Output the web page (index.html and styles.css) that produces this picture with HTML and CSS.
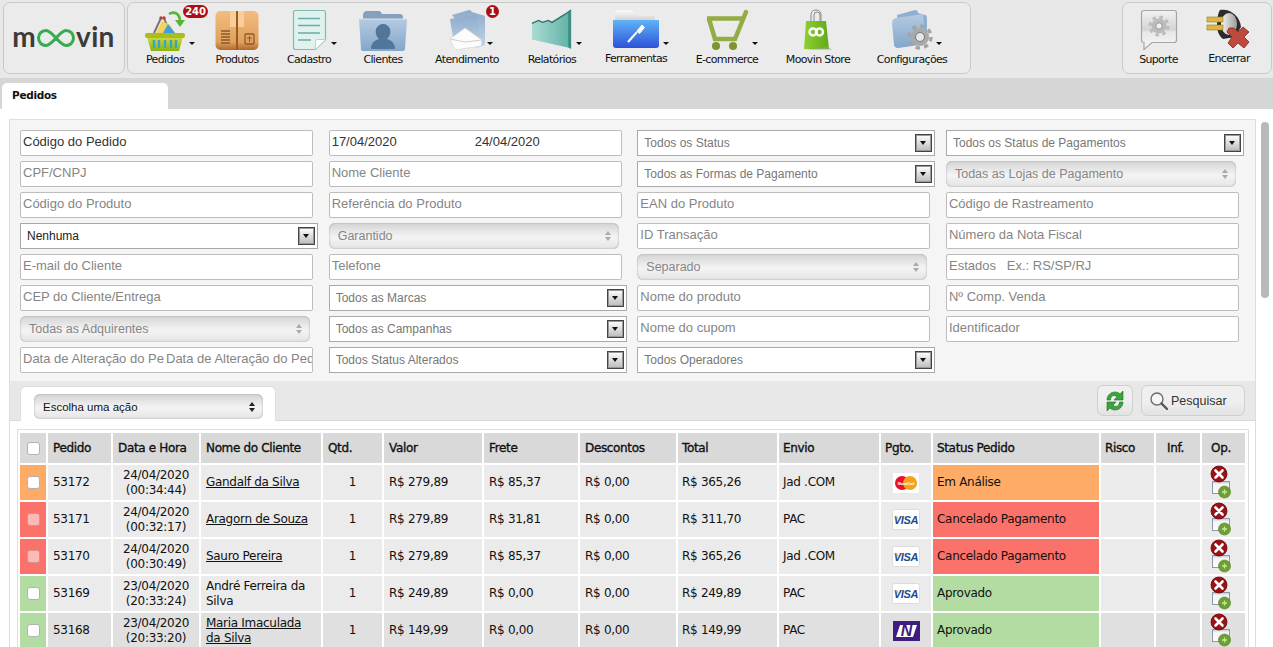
FILE: index.html
```html
<!DOCTYPE html>
<html lang="pt-BR">
<head>
<meta charset="utf-8">
<title>Pedidos</title>
<link rel="stylesheet" href="styles.css">
</head>
<body>
<svg class="defs" aria-hidden="true">
  <defs>
    <linearGradient id="gBlue" x1="0" y1="0" x2="0" y2="1"><stop offset="0" stop-color="#b4cbe2"/><stop offset="1" stop-color="#83a6c9"/></linearGradient>
    <linearGradient id="gBack" x1="0" y1="0" x2="0" y2="1"><stop offset="0" stop-color="#8dabca"/><stop offset="1" stop-color="#c3d6e8"/></linearGradient>
    <linearGradient id="gBox" x1="0" y1="0" x2="0" y2="1"><stop offset="0" stop-color="#f3bd7e"/><stop offset=".8" stop-color="#e0a05c"/><stop offset="1" stop-color="#b06828"/></linearGradient>
    <linearGradient id="gTeal" x1="0" y1="0" x2="1" y2="0"><stop offset="0" stop-color="#a9dcd3"/><stop offset="1" stop-color="#5fb0a6"/></linearGradient>
    <linearGradient id="gFolder" x1="0" y1="0" x2="0" y2="1"><stop offset="0" stop-color="#5fb4f6"/><stop offset="1" stop-color="#2c52d8"/></linearGradient>
    <linearGradient id="gPaper" x1="0" y1="0" x2="0" y2="1"><stop offset="0" stop-color="#fbfbfb"/><stop offset="1" stop-color="#c4c4c4"/></linearGradient>
    <linearGradient id="gBasket" x1="0" y1="0" x2="0" y2="1"><stop offset="0" stop-color="#d4d93a"/><stop offset="1" stop-color="#88b312"/></linearGradient>
    <linearGradient id="gBag" x1="0" y1="0" x2="1" y2="0"><stop offset="0" stop-color="#8fd030"/><stop offset="1" stop-color="#62a81a"/></linearGradient>
    <linearGradient id="gBubble" x1="0" y1="0" x2="0" y2="1"><stop offset="0" stop-color="#f2f2f2"/><stop offset=".5" stop-color="#d4d4d4"/><stop offset=".55" stop-color="#e8e8e8"/><stop offset="1" stop-color="#f6f6f6"/></linearGradient>
    <linearGradient id="gWheel" x1="0" y1="0" x2="1" y2="0"><stop offset="0" stop-color="#f6f6f6"/><stop offset="1" stop-color="#9c9c9c"/></linearGradient>
    <linearGradient id="gDoc" x1="0" y1="0" x2="0" y2="1"><stop offset="0" stop-color="#c2c8d4"/><stop offset=".25" stop-color="#f4f5f7"/><stop offset="1" stop-color="#fdfdfd"/></linearGradient>
    <symbol id="iDel" viewBox="0 0 18 18">
      <circle cx="9" cy="9" r="8" fill="#9c0f14" stroke="#5e0a0c" stroke-width=".8"/>
      <path d="M5.500 5.500l7 7M12.500 5.500l-7 7" stroke="#fff" stroke-width="2.600" stroke-linecap="round"/>
    </symbol>
    <symbol id="iAdd" viewBox="0 0 20 18">
      <rect x=".5" y=".5" width="17" height="12" fill="url(#gDoc)" stroke="#8f98a8"/>
      <circle cx="12.500" cy="11" r="6" fill="#6d9f35" stroke="#4c7f1a" stroke-width=".6"/>
      <path d="M12.500 8.500v5M10 11h5" stroke="#c5e69c" stroke-width="1.300"/>
    </symbol>
    <symbol id="iMaster" viewBox="0 0 26 20">
      <rect width="26" height="20" fill="#fff" rx="1"/>
      <circle cx="9" cy="10" r="7" fill="#e8102a"/>
      <circle cx="17" cy="10" r="7" fill="#f7a11b"/>
      <text x="13" y="11.500" class="mc-text">MasterCard</text>
    </symbol>
    <symbol id="iVisa" viewBox="0 0 28 21">
      <rect x=".5" y=".5" width="27" height="20" rx="2" fill="#fff" stroke="#dcdcdc"/>
      <text x="14" y="15" class="visa-text">VISA</text>
      <path d="M2.500 7.500l3 0 1 3z" fill="#f2ae2e"/>
    </symbol>
    <symbol id="iNet" viewBox="0 0 27 20">
      <rect width="27" height="20" fill="#3f1d7c"/>
      <path d="M7 4h17l-4 12H3z" fill="#fff"/>
      <text x="13.500" y="15.300" class="net-text">N</text>
    </symbol>
  </defs>
</svg>

<header class="topbar">
  <div class="box logo">
    <span class="logo-word">m</span>
    <svg class="logo-loop" viewBox="0 0 42 22" width="42" height="22"><path d="M11 3.500c-4.300 0-7.500 3.300-7.500 7.500s3.200 7.500 7.500 7.500c6.500 0 13.500-15 20-15 4.300 0 7.500 3.300 7.500 7.500s-3.200 7.500-7.500 7.500c-6.500 0-13.500-15-20-15z" fill="none" stroke="#36ab4f" stroke-width="3"/></svg>
    <span class="logo-word">vin</span>
  </div>

  <nav class="box nav">
    <a class="nav-item">
      <svg width="44" height="42" viewBox="0 0 44 42">
        <path d="M11 24L18 9M27 24L21 9" stroke="#77777a" stroke-width="2"/>
        <path d="M13 24l6-12 8 4 5 8z" fill="#f3d35c"/><path d="M20 24l5-9 7 9z" fill="#3d9fe0"/>
        <circle cx="18" cy="9" r="1.700" fill="#b7402f"/><circle cx="21" cy="9" r="1.700" fill="#b7402f"/>
        <path d="M26 5c5-3 10-1 11 6" fill="none" stroke="#56b534" stroke-width="2.600"/><path d="M32 11h10l-5 7z" fill="#56b534"/>
        <path d="M4 28h36l-4 14H8z" fill="url(#gBasket)"/>
        <path d="M11 31v8M16 31v8M22 31v8M28 31v8M33 31v8" stroke="#37a6c5" stroke-width="2.400"/>
        <rect x="2" y="24" width="40" height="5" rx="2" fill="#a9bd1c"/>
      </svg>
      <span class="caret caret-a"></span><span class="badge badge-a">240</span>
      <span class="nav-label">Pedidos</span>
    </a>
    <a class="nav-item">
      <svg width="44" height="42" viewBox="0 0 44 42">
        <rect y="2" x=".5" width="43" height="39" rx="5" fill="url(#gBox)"/>
        <rect x="15" y="2" width="14" height="16" fill="#f8cf9a"/>
        <rect x="21" y="2" width="2" height="39" fill="#9c5a20"/>
        <path d="M6 22h9M6 25h9M6 28h9M6 31h9M6 34h9" stroke="#8a5a2e" stroke-width="1.500"/>
        <rect x="30" y="25" width="9" height="10" rx="1" fill="none" stroke="#8a5a2e" stroke-width="1.300"/><path d="M32 29h5M34.500 27v6" stroke="#8a5a2e"/>
      </svg>
      <span class="nav-label">Produtos</span>
    </a>
    <a class="nav-item">
      <svg width="36" height="42" viewBox="0 0 36 42">
        <path d="M2.500 3.500q0-2 2-2h28q2 0 2 2v27l-10 10h-20q-2 0-2-2z" fill="#dff2ee" stroke="#83b8b3" stroke-width="1.200"/>
        <path d="M7 9.500h22M7 16.500h22M7 24h22M7 31h13" stroke="#6eaaa6" stroke-width="1.500"/>
        <path d="M24.500 40.500v-8q0-2 2-2h8z" fill="#fff" stroke="#b9cfcc"/>
      </svg>
      <span class="caret caret-c"></span>
      <span class="nav-label">Cadastro</span>
    </a>
    <a class="nav-item">
      <svg width="48" height="42" viewBox="0 0 48 42">
        <path d="M4 7q0-5 4-5h12q2 0 3 3h18q3 0 3 4v6H4z" fill="#84a0ba"/>
        <path d="M0 10h48l-2 30q0 2-3 2H5q-3 0-3-2z" fill="url(#gBlue)"/>
        <path d="M1 10h46" stroke="#d7e5f0"/>
        <path d="M12 40c0-7 5-9 8-10-3-3-4-6-3-10 1-3 4-5 7-5s6 2 7 5c1 4 0 7-3 10 3 1 8 3 8 10z" fill="#517699"/>
      </svg>
      <span class="nav-label">Clientes</span>
    </a>
    <a class="nav-item">
      <svg width="40" height="42" viewBox="0 0 40 42">
        <path d="M5 6L22 1q2 0 3 2l10 3q3 0 3 3v27l-8 3z" fill="url(#gBack)"/>
        <path d="M3 10l26-4 6 30-27 5z" fill="url(#gBack)"/>
        <path d="M3 30l15-11 17 12-1 6-26 4z" fill="#fcfcfc" stroke="#d4d4d4" stroke-width=".6"/>
        <path d="M3 30l15 3 17-2" fill="none" stroke="#cfcfcf"/>
      </svg>
      <span class="caret caret-d"></span><span class="badge badge-d">1</span>
      <span class="nav-label">Atendimento</span>
    </a>
    <a class="nav-item">
      <svg width="42" height="42" viewBox="0 0 44 42">
        <path d="M1 14l7-3 4 2 6-2 4 2 8-5 8-5 4-3v40L1 31z" fill="url(#gTeal)"/>
        <path d="M1 14l7-3 4 2 6-2 4 2 8-5 8-5 4-3" fill="none" stroke="#2f6f68" stroke-width="1.400"/>
        <path d="M39 3l3-2v40l-3-2z" fill="#3c8d84"/>
      </svg>
      <span class="caret caret-e"></span>
      <span class="nav-label">Relatórios</span>
    </a>
    <a class="nav-item nav-item-up">
      <svg width="48" height="40" viewBox="0 0 48 40">
        <path d="M3 4q0-3 3-3h12q2 0 4 3l3 3h18v8H3z" fill="url(#gPaper)"/>
        <path d="M1 11h15l3 0h28v25q0 3-3 3H4q-3 0-3-3z" fill="url(#gFolder)"/>
        <path d="M16 33l9-10" stroke="#fff" stroke-width="2"/><path d="M25 22l5-6 2.500 2.500-5 6z" fill="#fff" stroke="#fff"/>
      </svg>
      <span class="caret caret-f"></span>
      <span class="nav-label">Ferramentas</span>
    </a>
    <a class="nav-item">
      <svg width="46" height="42" viewBox="0 0 46 42">
        <path d="M3 9.500h36" stroke="#93ad44" stroke-width="4.500"/>
        <path d="M5 10l6 20h20l11-27" fill="none" stroke="#93ad44" stroke-width="4.500" stroke-linecap="round"/>
        <circle cx="12" cy="37" r="4" fill="#7c9432"/><circle cx="29" cy="37" r="4" fill="#7c9432"/>
      </svg>
      <span class="caret caret-g"></span>
      <span class="nav-label">E-commerce</span>
    </a>
    <a class="nav-item">
      <svg width="30" height="42" viewBox="0 0 30 42">
        <path d="M8 12V6q0-5 5-5t5 5v6M11 12V6q0-3 3-3t3 3v6" fill="none" stroke="#8b8b8b"/>
        <path d="M3 12h20l3 28H1z" fill="url(#gBag)"/>
        <circle cx="10" cy="23" r="3.500" fill="none" stroke="#fff" stroke-width="2.500"/><circle cx="16.500" cy="23" r="3.500" fill="none" stroke="#fff" stroke-width="2.500"/>
        <path d="M26 38l3 3H1z" fill="#aaa" opacity=".5"/>
      </svg>
      <span class="nav-label">Moovin Store</span>
    </a>
    <a class="nav-item">
      <svg width="42" height="42" viewBox="0 0 42 42">
        <path d="M6 6l18-5q3 0 3 3l7 2q2 0 2 4v20H8z" fill="#8fb0d2"/>
        <path d="M1 14q0-4 4-5l27-4 3 30-28 4q-3 0-4-3z" fill="url(#gBlue)"/>
        <circle cx="29" cy="28" r="9" fill="#a9a9a9"/>
        <circle cx="29" cy="28" r="11" fill="none" stroke="#a4a4a4" stroke-width="3.500" stroke-dasharray="4.300 4.340"/>
        <circle cx="29" cy="28" r="4.500" fill="#e6e6e6" stroke="#777"/>
      </svg>
      <span class="caret caret-h"></span>
      <span class="nav-label">Configurações</span>
    </a>
  </nav>

  <div class="box nav nav-right">
    <a class="nav-item">
      <svg width="40" height="42" viewBox="0 0 40 42">
        <path d="M2.500 4q0-2.500 2.500-2.500h30q2.500 0 2.500 2.500v27q0 2.500-2.500 2.500H13l-8 7v-7q-2.500 0-2.500-2.500z" fill="url(#gBubble)" stroke="#a6a6a6" stroke-width="1.200"/>
        <circle cx="20" cy="17" r="7.500" fill="#bbb"/>
        <circle cx="20" cy="17" r="9" fill="none" stroke="#bbb" stroke-width="3" stroke-dasharray="3.500 3.570"/>
        <circle cx="20" cy="17" r="3.200" fill="#f0f0f0" stroke="#999"/>
      </svg>
      <span class="nav-label">Suporte</span>
    </a>
    <a class="nav-item nav-item-up">
      <svg width="46" height="40" viewBox="0 0 46 40">
        <path d="M14 1c10-2 20 6 21 17l-6 10-12 2c-4-3-6-8-6-14s1-12 3-15z" fill="#2c2c2c"/>
        <ellipse cx="23" cy="15" rx="8" ry="11" fill="url(#gWheel)"/>
        <rect x="1" y="8" width="16" height="5" fill="#dcb640" stroke="#9c7a1c" stroke-width=".6"/>
        <rect x="1" y="16" width="16" height="5" fill="#dcb640" stroke="#9c7a1c" stroke-width=".6"/>
        <path d="M23 19l5 0 4 4 5-5 6 5-5 5 5 5-5 6-6-5-5 5-5-5 4-6-5-5z" fill="#bd4a3c" stroke="#7d2a22" stroke-width=".8"/>
      </svg>
      <span class="nav-label">Encerrar</span>
    </a>
  </div>
</header>

<div class="tabbar"><div class="tab">Pedidos</div></div>

<div class="content">
  <main class="main">
    <form class="filters">
      <input class="field field-dark" value="Código do Pedido">
      <div class="field field-range"><input class="range-part" value="17/04/2020"><input class="range-part" value="24/04/2020"></div>
      <div class="pick"><select class="pick-sel"><option>Todos os Status</option></select><span class="pick-btn"></span></div>
      <div class="pick"><select class="pick-sel"><option>Todos os Status de Pagamentos</option></select><span class="pick-btn"></span></div>

      <input class="field" placeholder="CPF/CNPJ">
      <input class="field" placeholder="Nome Cliente">
      <div class="pick"><select class="pick-sel"><option>Todos as Formas de Pagamento</option></select><span class="pick-btn"></span></div>
      <div class="locked">Todas as Lojas de Pagamento<span class="updown"></span></div>

      <input class="field" placeholder="Código do Produto">
      <input class="field" placeholder="Referência do Produto">
      <input class="field" placeholder="EAN do Produto">
      <input class="field" placeholder="Código de Rastreamento">

      <div class="pick"><select class="pick-sel pick-dark"><option>Nenhuma</option></select><span class="pick-btn"></span></div>
      <div class="locked">Garantido<span class="updown"></span></div>
      <input class="field" placeholder="ID Transação">
      <input class="field" placeholder="Número da Nota Fiscal">

      <input class="field" placeholder="E-mail do Cliente">
      <input class="field" placeholder="Telefone">
      <div class="locked">Separado<span class="updown"></span></div>
      <input class="field" placeholder="Estados   Ex.: RS/SP/RJ">

      <input class="field" placeholder="CEP do Cliente/Entrega">
      <div class="pick"><select class="pick-sel"><option>Todos as Marcas</option></select><span class="pick-btn"></span></div>
      <input class="field" placeholder="Nome do produto">
      <input class="field" placeholder="Nº Comp. Venda">

      <div class="locked">Todas as Adquirentes<span class="updown"></span></div>
      <div class="pick"><select class="pick-sel"><option>Todos as Campanhas</option></select><span class="pick-btn"></span></div>
      <input class="field" placeholder="Nome do cupom">
      <input class="field" placeholder="Identificador">

      <div class="field field-range"><input class="range-part" placeholder="Data de Alteração do Pedido"><input class="range-part" placeholder="Data de Alteração do Pedido"></div>
      <div class="pick"><select class="pick-sel"><option>Todos Status Alterados</option></select><span class="pick-btn"></span></div>
      <div class="pick"><select class="pick-sel"><option>Todos Operadores</option></select><span class="pick-btn"></span></div>
    </form>

    <section class="actions">
      <div class="action-tab"><div class="locked locked-action">Escolha uma ação<span class="updown updown-dark"></span></div></div>
      <div class="action-btns">
        <button class="btn btn-icon" type="button" aria-label="Atualizar">
          <svg width="22" height="24" viewBox="0 0 22 24">
            <path d="M3 11c0-5 4-8 8-8 2 0 4 .7 5 2l3-3v9h-9l3-3c-1-1-2-1.500-3-1.500-2 0-3.500 2-3.500 4.500z" fill="#3ea33d" stroke="#1f6f24" stroke-width=".6"/>
            <path d="M19 13c0 5-4 8-8 8-2 0-4-.7-5-2l-3 3v-9h9l-3 3c1 1 2 1.500 3 1.500 2 0 3.500-2 3.500-4.500z" fill="#3ea33d" stroke="#1f6f24" stroke-width=".6"/>
          </svg>
        </button>
        <button class="btn btn-search" type="button">
          <svg width="20" height="20" viewBox="0 0 20 20">
            <circle cx="8" cy="8" r="6" fill="#f4f6f8" stroke="#6d6d6d" stroke-width="1.400"/>
            <path d="M12.500 12.500l5.500 5.500" stroke="#555" stroke-width="2.400" stroke-linecap="round"/>
          </svg>
          Pesquisar
        </button>
      </div>
    </section>

    <div class="table-wrap">
      <table class="orders">
        <colgroup>
          <col class="c-check"><col class="c-id"><col class="c-date"><col class="c-name"><col class="c-qty"><col class="c-val"><col class="c-ship"><col class="c-disc"><col class="c-total"><col class="c-send"><col class="c-pay"><col class="c-status"><col class="c-risk"><col class="c-inf"><col class="c-op">
        </colgroup>
        <thead>
          <tr>
            <th class="cell-check"><input type="checkbox" class="check"></th>
            <th>Pedido</th><th>Data e Hora</th><th>Nome do Cliente</th><th>Qtd.</th><th>Valor</th><th>Frete</th><th>Descontos</th><th class="tight">Total</th><th class="tight">Envio</th><th class="tight">Pgto.</th><th class="tight">Status Pedido</th><th class="tight">Risco</th><th class="center shift">Inf.</th><th class="center shift">Op.</th>
          </tr>
        </thead>
        <tbody>
          <tr>
            <td class="cell-check st-orange"><input type="checkbox" class="check"></td>
            <td>53172</td><td class="center">24/04/2020<br>(00:34:44)</td><td><a class="client">Gandalf da Silva</a></td><td class="center">1</td><td>R$ 279,89</td><td>R$ 85,37</td><td>R$ 0,00</td><td class="tight">R$ 365,26</td><td class="tight">Jad .COM</td>
            <td class="center"><svg class="pay" width="26" height="20"><use href="#iMaster"/></svg></td>
            <td class="st-orange tight">Em Análise</td><td></td><td></td>
            <td class="cell-op"><svg class="op-del" width="18" height="18"><use href="#iDel"/></svg><svg class="op-add" width="20" height="18"><use href="#iAdd"/></svg></td>
          </tr>
          <tr>
            <td class="cell-check st-red"><input type="checkbox" class="check check-off"></td>
            <td>53171</td><td class="center">24/04/2020<br>(00:32:17)</td><td><a class="client">Aragorn de Souza</a></td><td class="center">1</td><td>R$ 279,89</td><td>R$ 31,81</td><td>R$ 0,00</td><td class="tight">R$ 311,70</td><td class="tight">PAC</td>
            <td class="center"><svg class="pay" width="28" height="21"><use href="#iVisa"/></svg></td>
            <td class="st-red tight">Cancelado Pagamento</td><td></td><td></td>
            <td class="cell-op"><svg class="op-del" width="18" height="18"><use href="#iDel"/></svg><svg class="op-add" width="20" height="18"><use href="#iAdd"/></svg></td>
          </tr>
          <tr>
            <td class="cell-check st-red"><input type="checkbox" class="check check-off"></td>
            <td>53170</td><td class="center">24/04/2020<br>(00:30:49)</td><td><a class="client">Sauro Pereira</a></td><td class="center">1</td><td>R$ 279,89</td><td>R$ 85,37</td><td>R$ 0,00</td><td class="tight">R$ 365,26</td><td class="tight">Jad .COM</td>
            <td class="center"><svg class="pay" width="28" height="21"><use href="#iVisa"/></svg></td>
            <td class="st-red tight">Cancelado Pagamento</td><td></td><td></td>
            <td class="cell-op"><svg class="op-del" width="18" height="18"><use href="#iDel"/></svg><svg class="op-add" width="20" height="18"><use href="#iAdd"/></svg></td>
          </tr>
          <tr>
            <td class="cell-check st-green"><input type="checkbox" class="check"></td>
            <td>53169</td><td class="center">23/04/2020<br>(20:33:24)</td><td>André Ferreira da Silva</td><td class="center">1</td><td>R$ 249,89</td><td>R$ 0,00</td><td>R$ 0,00</td><td class="tight">R$ 249,89</td><td class="tight">PAC</td>
            <td class="center"><svg class="pay" width="28" height="21"><use href="#iVisa"/></svg></td>
            <td class="st-green tight">Aprovado</td><td></td><td></td>
            <td class="cell-op"><svg class="op-del" width="18" height="18"><use href="#iDel"/></svg><svg class="op-add" width="20" height="18"><use href="#iAdd"/></svg></td>
          </tr>
          <tr class="row-hover">
            <td class="cell-check st-green"><input type="checkbox" class="check"></td>
            <td>53168</td><td class="center">23/04/2020<br>(20:33:20)</td><td><a class="client">Maria Imaculada da Silva</a></td><td class="center">1</td><td>R$ 149,99</td><td>R$ 0,00</td><td>R$ 0,00</td><td class="tight">R$ 149,99</td><td class="tight">PAC</td>
            <td class="center"><svg class="pay" width="27" height="20"><use href="#iNet"/></svg></td>
            <td class="st-green tight">Aprovado</td><td></td><td></td>
            <td class="cell-op"><svg class="op-del" width="18" height="18"><use href="#iDel"/></svg><svg class="op-add" width="20" height="18"><use href="#iAdd"/></svg></td>
          </tr>
        </tbody>
      </table>
    </div>
  </main>
  <div class="rail"><span class="thumb"></span></div>
</div>
</body>
</html>
```
FILE: styles.css
```css
* { box-sizing: border-box; }
html, body { margin: 0; height: 647px; overflow: hidden; background: #fff; }
body { font-family: "DejaVu Sans", Verdana, sans-serif; font-size: 12px; color: #111; }
.defs { position: absolute; width: 0; height: 0; }

/* top bar */
.topbar { height: 78px; background: #e8e8e8; display: flex; padding: 2px 1px 0 3px; }
.box { height: 72px; border: 1px solid #c9c9c9; border-radius: 7px; background: #ebebeb; }
.logo { width: 122px; display: flex; align-items: center; justify-content: center; margin-right: 2px; padding-right: 1px; }
.logo-word { font-family: Lato, sans-serif; font-size: 28px; font-weight: 700; letter-spacing: .3px; color: #3b3b3b; line-height: 1; margin-top: -4px; }
.logo-loop { margin: 0 -1px; flex: none; }
.nav { width: 844px; display: grid; grid-template-columns: 70px 74px 70px 78px 90px 80px 88px 94px 88px 100px; padding-left: 2px; }
.nav-right { width: 150px; margin-left: auto; grid-template-columns: 71px 70px; padding-left: 0; }
.nav-item { position: relative; display: flex; flex-direction: column; align-items: center; padding-top: 6px; height: 70px; }
.nav-item svg { height: 42px; flex: none; display: block; }
.nav-item-up svg { height: 40px; }
.nav-label { margin-top: 2px; font-size: 11px; line-height: 14px; color: #111; white-space: nowrap; letter-spacing: -.65px; }
.nav-item-up .nav-label { margin-top: 3px; }
.caret { position: absolute; top: 39px; width: 0; height: 0; border: 3px solid transparent; border-top: 3px solid #111; border-bottom: 0; }
.caret-a { left: 59px; } .caret-c { left: 57px; } .caret-d { left: 65px; } .caret-e { left: 64px; }
.caret-f { left: 71px; } .caret-g { left: 72px; } .caret-h { left: 74px; }
.badge { position: absolute; background: #b00d12; color: #fff; font-size: 10px; font-weight: 700; line-height: 13px; height: 13px; border-radius: 7px; text-align: center; }
.badge-a { left: 53px; top: 2px; width: 25px; letter-spacing: -.2px; }
.badge-d { left: 64px; top: 2px; width: 13px; }

/* tabs */
.tabbar { height: 31px; background: #d6d6d6; padding: 5px 0 0 2px; }
.tab { width: 166px; height: 26px; background: #fff; border-radius: 5px 5px 0 0; padding: 6px 10px; font-size: 10.500px; font-weight: 700; line-height: 12px; letter-spacing: -.3px; }

/* content */
.content { display: flex; padding: 10px 0 0 9px; }
.main { width: 1247px; flex: none; border-left: 1px solid #dcdcdc; border-right: 1px solid #dcdcdc; border-top: 1px solid #e0e0e0; height: 528px; }
.rail { position: relative; width: 17px; flex: none; }
.thumb { position: absolute; left: 5px; top: 3px; width: 8px; height: 176px; border-radius: 4px; background: #b9b9b9; }

/* filters */
.filters { height: 261px; background: #f5f5f5; padding: 10px 0 0 10px; display: grid; grid-template-columns: repeat(4, 293px); column-gap: 15.670px; grid-auto-rows: 26px; row-gap: 5px; font-family: "Liberation Sans", Arial, sans-serif; font-size: 13px; }
.field { width: 293px; height: 26px; border: 1px solid #bdbdbd; border-radius: 2px; background: #fff; padding: 0 2px 4px; font: inherit; color: #333; outline: 0; }
.field::placeholder, .range-part::placeholder { color: #858585; opacity: 1; }
.field-range { display: flex; padding: 0; }
.range-part { width: 143px; flex: none; border: 0; background: transparent; font: inherit; color: #333; padding: 0 0 3px 2px; outline: 0; min-width: 0; }
.range-part + .range-part { width: 148px; }
.pick { position: relative; width: 298px; height: 26px; }
.pick-sel { appearance: none; -webkit-appearance: none; width: 100%; height: 26px; border: 1px solid #a9a9a9; border-radius: 0; background: #fff; font: inherit; font-size: 12px; color: #777; padding: 0 0 0 6px; outline: 0; }
.pick-dark { color: #222; }
.pick-btn { position: absolute; right: 3px; top: 4px; width: 17px; height: 18px; border: 1px solid #444; outline: 1px solid #999; outline-offset: -2px; background: linear-gradient(#fff, #bbb); pointer-events: none; }
.pick-btn::after { content: ""; position: absolute; left: 4px; top: 6px; border: 3.500px solid transparent; border-top: 4px solid #111; border-bottom: 0; }
.locked { position: relative; width: 290px; height: 26px; border-radius: 6px; padding-left: 9px; line-height: 26px; font-size: 12.500px; color: #868686; background: linear-gradient(#d4d4d4, #f4f4f4 55%, #e4e4e4); box-shadow: inset 0 0 2px #999; }
.updown { position: absolute; right: 8px; top: 8px; width: 0; height: 0; border: 3px solid transparent; border-bottom: 4px solid #aaa; border-top: 0; }
.updown::after { content: ""; position: absolute; left: -3px; top: 6px; border: 3px solid transparent; border-top: 4px solid #aaa; border-bottom: 0; }
.updown-dark { border-bottom-color: #222; }
.updown-dark::after { border-top-color: #222; }

/* actions */
.actions { height: 40px; background: #e8e8e8; border-bottom: 1px solid #d9d9d9; display: flex; justify-content: space-between; padding: 5px 10px 0 10px; }
.action-tab { width: 256px; height: 35px; background: #fff; border: 1px solid #dedede; border-bottom: 0; border-radius: 6px 6px 0 0; padding: 7px 0 0 13px; }
.locked-action { width: 229px; height: 25px; line-height: 27px; color: #111; font-family: "Liberation Sans", Arial, sans-serif; font-size: 11.500px; padding-left: 9px; }
.action-btns { display: flex; gap: 8px; margin-top: -1px; align-items: flex-start; }
.btn { height: 31px; border: 1px solid #cfcfcf; border-radius: 6px; background: linear-gradient(#efefef, #efefef 55%, #e2e2e2); display: flex; align-items: center; justify-content: center; font-family: "Liberation Sans", Arial, sans-serif; font-size: 12.500px; color: #333; padding: 0; }
.btn-icon { width: 36px; }
.btn-search { width: 104px; gap: 2px; justify-content: flex-start; padding: 0 0 0 7px; }

/* table */
.table-wrap { margin: 8px 0 0 7px; width: 1232px; border: 1px solid #dedede; border-bottom: 0; padding: 1px 1px 0 0; height: 220px; overflow: hidden; }
.orders { width: 1229px; table-layout: fixed; border-collapse: separate; border-spacing: 2px; font-size: 12px; letter-spacing: -.3px; }
.c-check { width: 26px; } .c-id { width: 63px; } .c-date { width: 86px; } .c-name { width: 120px; } .c-qty { width: 59px; }
.c-val { width: 98px; } .c-ship { width: 94px; } .c-disc { width: 96px; } .c-total { width: 99px; } .c-send { width: 100px; }
.c-pay { width: 50px; } .c-status { width: 166px; } .c-risk { width: 53px; } .c-inf { width: 44px; } .c-op { width: 43px; }
.orders th { height: 30px; background: #d9d9d9; text-align: left; padding: 0 5px; font-weight: 400; -webkit-text-stroke: .35px #111; letter-spacing: -.35px; }
.orders td { height: 35px; background: #ebebeb; padding: 0 5px; line-height: 15px; }
.orders .tight { padding-left: 4px; }
.orders .row-hover td { background: #e0e0e0; }
.orders th.center, .orders td.center { text-align: center; }
.orders th.shift { padding: 0 9px 0 4px; }
.orders .cell-check { padding: 0; text-align: center; }
.orders td.st-orange { background: #fdab66; }
.orders td.st-red { background: #fb726b; }
.orders td.st-green { background: #b3dca2; }
.check { appearance: none; -webkit-appearance: none; display: block; margin: 0 auto; width: 13px; height: 13px; background: #fff; border: 1px solid #b2b2b2; border-radius: 3px; }
.check-off { opacity: .5; }
.client { color: #111; text-decoration: underline; }
.pay { display: block; margin: 0 auto; }
.orders .cell-op { padding: 0; vertical-align: top; }
.op-del { display: block; margin: 0 0 0 8px; position: relative; }
.op-add { display: block; margin: -2px 0 0 10px; }
.mc-text { font: 700 3.500px "Liberation Sans", sans-serif; fill: #fff; text-anchor: middle; }
.visa-text { font: italic 700 11px "Liberation Sans", sans-serif; fill: #1c4b8c; text-anchor: middle; }
.net-text { font: italic 900 16px "Liberation Sans", sans-serif; fill: #3f1d7c; text-anchor: middle; }
```
